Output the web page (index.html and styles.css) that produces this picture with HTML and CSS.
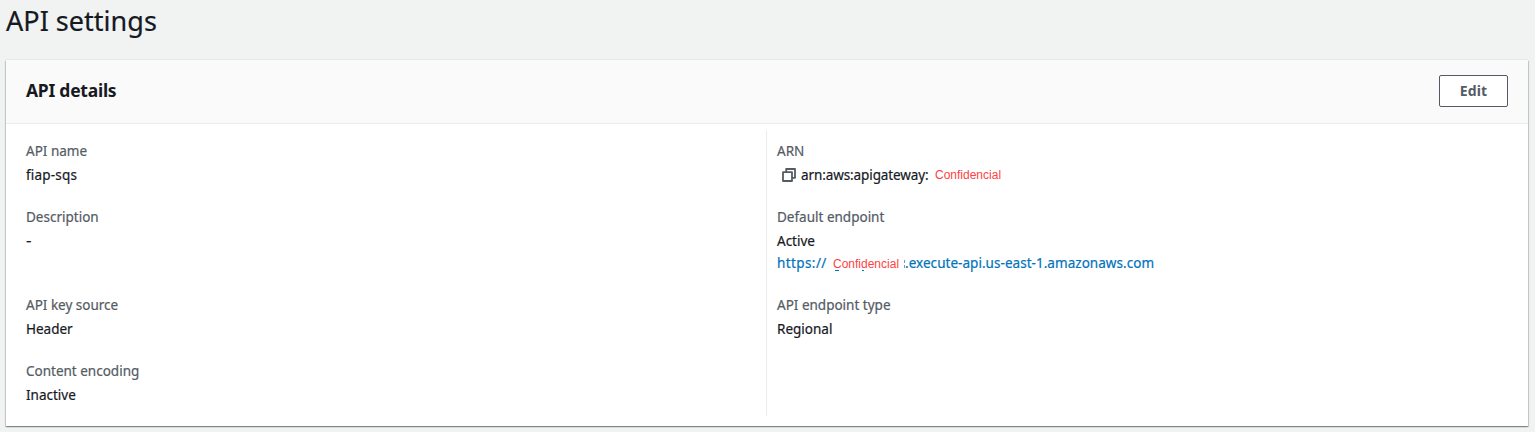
FILE: index.html
```html
<!DOCTYPE html>
<html lang="en">
<head>
<meta charset="utf-8">
<title>API settings</title>
<link rel="stylesheet" href="styles.css">
</head>
<body>
<main class="page">
  <h1 class="page-title">API settings</h1>
  <section class="panel">
    <header class="panel-header">
      <h2 class="panel-title">API details</h2>
      <button class="button" type="button">Edit</button>
    </header>
    <div class="columns">
      <div class="column">
        <div class="field"><div class="label">API name</div><div class="value value-name">fiap-sqs</div></div>
        <div class="field"><div class="label">Description</div><div class="value value-empty">-</div></div>
        <div class="field"><div class="label">API key source</div><div class="value">Header</div></div>
        <div class="field"><div class="label">Content encoding</div><div class="value">Inactive</div></div>
      </div>
      <div class="column column-divided">
        <div class="field">
          <div class="label">ARN</div>
          <div class="value arn">
            <svg class="copy-icon" viewBox="0 0 14 14" width="14" height="14"><path d="M1 4.2h9V13H1zM4.2 4.2V1H13v8.8H10" fill="none" stroke="currentColor" stroke-width="1.8" stroke-linejoin="round"/></svg>
            <span class="arn-text">arn:aws:apigateway:</span>
            <span class="redacted">Confidencial</span>
          </div>
        </div>
        <div class="field">
          <div class="label">Default endpoint</div>
          <div class="value">Active</div>
          <a class="link"><span class="scheme">https://</span><span class="redacted link-redacted">Confidencial</span><span class="host">.execute-api.us-east-1.amazonaws.com</span></a>
        </div>
        <div class="field"><div class="label">API endpoint type</div><div class="value">Regional</div></div>
      </div>
    </div>
  </section>
</main>
</body>
</html>
```
FILE: styles.css
```css
* { box-sizing: border-box; }
body {
  margin: 0;
  height: 432px;
  overflow: hidden;
  background: #f1f3f3;
  color: #16191f;
  font-family: "Noto Sans", "Open Sans", sans-serif;
  font-size: 13.5px;
  line-height: 22px;
}
.page { padding: 0 7px 0 6px; }
.page-title {
  margin: 0;
  height: 60px;
  padding-top: 3px;
  font-size: 27px;
  font-weight: 400;
  line-height: 36px;
  letter-spacing: 0.02px;
  -webkit-text-stroke: 0.2px currentColor;
}
.panel {
  height: 366px;
  background: #fff;
  box-shadow: 0 1px 1px 0 rgba(0, 28, 36, 0.3), 1px 1px 1px 0 rgba(0, 28, 36, 0.15), -1px 1px 1px 0 rgba(0, 28, 36, 0.15), 0 -1px 0 0 #e4e8e8;
}
.panel-header {
  display: flex;
  align-items: center;
  justify-content: space-between;
  height: 64px;
  padding: 0 20px 2px;
  background: #fafafa;
  border-bottom: 1px solid #eaeded;
}
.panel-title {
  margin: 0;
  padding-bottom: 2px;
  font-size: 17.5px;
  font-weight: 700;
  letter-spacing: -0.25px;
}
.button {
  width: 69px;
  height: 32px;
  padding: 0;
  border: 1px solid #545b64;
  border-radius: 2px;
  background: #fff;
  color: #545b64;
  font: 700 14px/22px "Noto Sans", sans-serif;
  letter-spacing: 0.1px;
}
.columns {
  display: grid;
  grid-template-columns: 760px 1fr;
  height: 302px;
  padding: 6px 0 10px;
}
.column {
  display: grid;
  grid-template-rows: 46px 68px 46px 46px;
  row-gap: 20px;
  padding: 10px 20px;
}
.column-divided {
  padding-left: 10px;
  border-left: 1px solid #eaeded;
}
.label, .value, .link { -webkit-text-stroke: 0.2px currentColor; }
.label {
  margin-bottom: 2px;
  color: #545b64;
}
.value-name { letter-spacing: 0.2px; }
.value-empty { transform: scaleX(1.25); transform-origin: left; }
.arn, .link { display: flex; align-items: center; white-space: nowrap; }
.arn { padding-left: 5px; }
.copy-icon { color: #545b64; }
.arn-text { width: 129px; margin-left: 5px; letter-spacing: -0.1px; }
.redacted {
  margin-left: 5px;
  color: #ff4242;
  font: 12px/22px "Liberation Sans", Arial, sans-serif;
  -webkit-text-stroke: 0;
}
.link { color: #0073bb; }
.scheme { width: 51px; letter-spacing: 0.4px; }
.link-redacted {
  width: 72px;
  padding-top: 2px;
  line-height: 20px;
  background:
    linear-gradient(#0073bb, #0073bb) 2px 18px / 4px 1px no-repeat,
    linear-gradient(#0073bb, #0073bb) 29px 18px / 2px 1px no-repeat,
    linear-gradient(#5ba5d4, #5ba5d4) 71px 8px / 1px 3px no-repeat,
    linear-gradient(#5ba5d4, #5ba5d4) 71px 13px / 1px 3px no-repeat;
}
.host { letter-spacing: 0.04px; }
```
